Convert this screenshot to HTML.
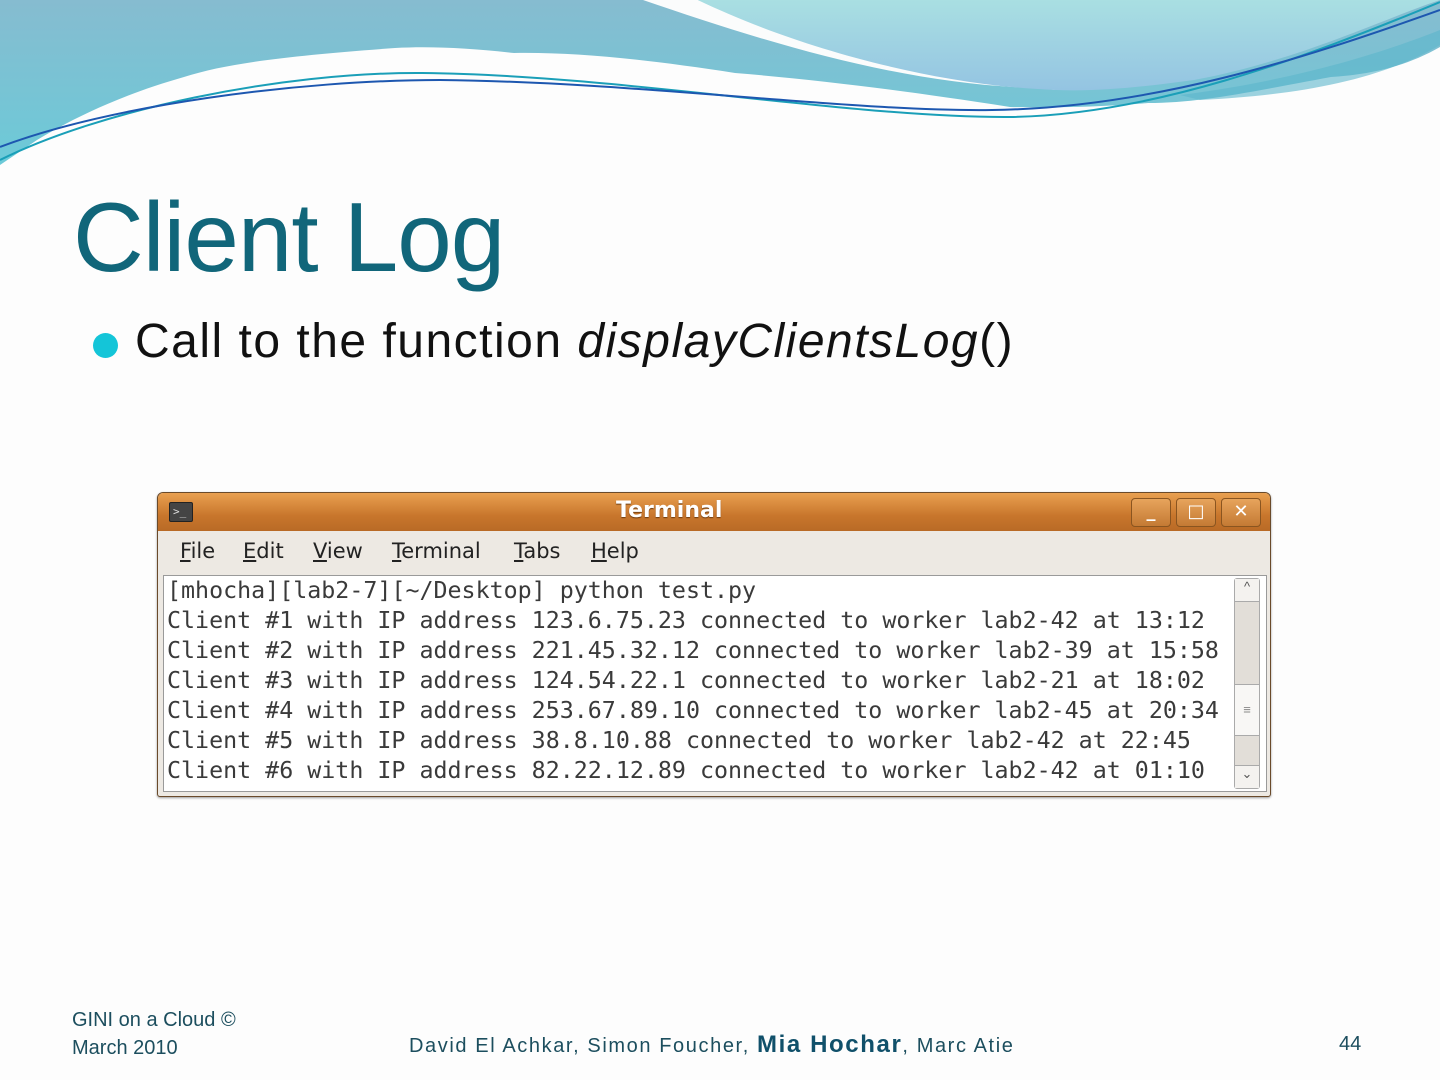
<!DOCTYPE html>
<html><head><meta charset="utf-8"><style>
body{margin:0;width:1440px;height:1080px;overflow:hidden;background:#fdfdfd;font-family:"Liberation Sans",sans-serif;position:relative}
.abs{position:absolute}
.title{left:73px;top:188px;font-size:98px;color:#11667a;line-height:1;letter-spacing:-1px}
.bul{left:93px;top:333px;width:25px;height:25px;border-radius:50%;background:#14c5d8}
.btxt{left:135px;top:316px;font-size:48px;color:#111;line-height:1.1;letter-spacing:1.5px;white-space:nowrap}
.win{left:157px;top:492px;width:1112px;height:303px;border:1px solid #6a4a2a;border-radius:6px 6px 3px 3px;background:#ede9e3;overflow:hidden;box-shadow:0 1px 2px #999}
.tb{position:absolute;left:0;top:0;right:0;height:38px;background:linear-gradient(#e9a050,#c8762c 60%,#b96a26)}
.tt{position:absolute;left:458px;top:5px;font:bold 22px "DejaVu Sans",sans-serif;color:#fff;text-shadow:0 1px 1px #6a3a10}
.btn{position:absolute;top:5px;width:38px;height:27px;border:1px solid #8a5520;border-radius:4px;background:linear-gradient(#e7a45c,#c47a34);color:#fff;text-align:center;font:bold 18px "DejaVu Sans";line-height:26px}
.menu span{position:absolute;top:46px;font:21px "DejaVu Sans",sans-serif;color:#222}
.term{position:absolute;left:5px;top:82px;width:1102px;height:215px;background:#fff;border:1px solid #9a9a9a}
.pre{position:absolute;left:3px;top:0;font:23.3px/30px "DejaVu Sans Mono",monospace;color:#3a3a3a;white-space:pre}
.sb{position:absolute;right:6px;top:2px;width:24px;height:209px;background:#e2ded8;border:1px solid #aaa;border-radius:3px}
.foot{font-size:20px;color:#1c4e5e;white-space:nowrap}
</style></head><body>
<svg class="abs" style="left:0;top:0" width="1440" height="170" viewBox="0 0 1440 170">
<defs><linearGradient id="g1" x1="0" y1="0" x2="0" y2="1"><stop offset="0" stop-color="#86bcd0"/><stop offset="1" stop-color="#6ccad8"/></linearGradient>
<linearGradient id="g2" x1="0" y1="0" x2="0" y2="1"><stop offset="0" stop-color="#a9dfe2"/><stop offset="1" stop-color="#94c4e2"/></linearGradient></defs>
<path d="M0,0 H1440 V47 C1400,70 1360,75 1331,77 C1250,92 1200,103 1148,103 C1100,107 1050,108 1010,107 C900,90 820,80 735,73 C650,60 580,52 514,53 C470,48 430,46 395,48 C300,55 230,62 184,77 C120,95 70,120 37,140 L0,165 Z" fill="url(#g1)"/>
<path d="M643,0 C760,40 900,85 1038,88 L1056,90 C900,60 760,30 698,0 Z" fill="#fbfcfc"/>
<path d="M698,0 C780,40 920,85 1056,90 C1100,92 1150,86 1194,80 C1300,60 1380,20 1440,0 Z" fill="url(#g2)"/>
<path d="M1180,95 C1300,80 1390,50 1440,30 V45 C1380,80 1300,95 1200,100 Z" fill="#5cb6cc" opacity="0.6"/>
<path d="M0,160 C100,110 280,72 422,73 C620,75 850,118 1010,117 C1150,115 1300,60 1440,2" fill="none" stroke="#1a9fb8" stroke-width="2"/>
<path d="M0,147 C110,105 300,80 440,80 C640,82 850,112 992,110 C1150,108 1300,60 1440,10" fill="none" stroke="#1d57b0" stroke-width="2"/>
</svg>
<div class="abs title">Client Log</div>
<div class="abs bul"></div>
<div class="abs btxt">Call to the function <i>displayClientsLog</i>()</div>
<div class="abs win">
 <div class="tb"><div style="position:absolute;left:11px;top:9px;width:24px;height:20px;background:#444;border:1px solid #222;border-radius:2px;color:#ddd;font:11px monospace;line-height:18px;padding-left:3px;box-sizing:border-box">&gt;_</div>
 <div class="tt">Terminal</div>
 <div class="btn" style="left:973px">_</div><div class="btn" style="left:1018px">□</div><div class="btn" style="left:1063px">✕</div></div>
 <div class="menu"><span style="left:22px"><u>F</u>ile</span><span style="left:85px"><u>E</u>dit</span><span style="left:155px"><u>V</u>iew</span><span style="left:234px"><u>T</u>erminal</span><span style="left:356px"><u>T</u>abs</span><span style="left:433px"><u>H</u>elp</span></div>
 <div class="term"><div class="pre">[mhocha][lab2-7][~/Desktop] python test.py
Client #1 with IP address 123.6.75.23 connected to worker lab2-42 at 13:12
Client #2 with IP address 221.45.32.12 connected to worker lab2-39 at 15:58
Client #3 with IP address 124.54.22.1 connected to worker lab2-21 at 18:02
Client #4 with IP address 253.67.89.10 connected to worker lab2-45 at 20:34
Client #5 with IP address 38.8.10.88 connected to worker lab2-42 at 22:45
Client #6 with IP address 82.22.12.89 connected to worker lab2-42 at 01:10</div>
 <div class="sb"><div style="height:22px;border-bottom:1px solid #aaa;background:#f4f2ef;text-align:center;font-size:13px;color:#555">^</div>
 <div style="position:absolute;top:105px;left:0;right:0;height:50px;background:#f8f7f5;border:1px solid #aaa;border-left:0;border-right:0;text-align:center;color:#888;line-height:50px;font-size:13px">≡</div>
 <div style="position:absolute;bottom:0;left:0;right:0;height:22px;border-top:1px solid #aaa;background:#f4f2ef;text-align:center;font-size:13px;color:#555">⌄</div></div>
 </div>
</div>
<div class="abs foot" style="left:72px;top:1006px;line-height:28px">GINI on a Cloud ©<br>March 2010</div>
<div class="abs foot" style="left:409px;top:1031px;letter-spacing:1.6px">David El Achkar, Simon Foucher, <b style="font-size:24px;color:#10506a">Mia Hochar</b>, Marc Atie</div>
<div class="abs foot" style="left:1339px;top:1033px">44</div>
</body></html>
